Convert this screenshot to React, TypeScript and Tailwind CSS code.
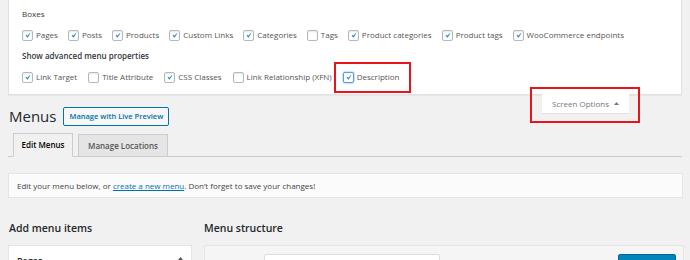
import React from "react";

function Cb({ checked = false, focus = false }: { checked?: boolean; focus?: boolean }) {
  return (
    <span
      className={
        focus
          ? "w-[11px] h-[11px] shrink-0 rounded-[2px] border border-[#5b9dd9] bg-white shadow-[0_0_2px_rgba(30,140,190,0.8)] flex items-center justify-center"
          : "w-[11px] h-[11px] shrink-0 rounded-[2px] border border-[#b4b9be] bg-white shadow-[inset_0_1px_2px_rgba(0,0,0,0.1)] flex items-center justify-center"
      }
    >
      {checked && (
        <svg viewBox="0 0 20 20" className="w-[13px] h-[13px]">
          <path d="M14.83 4.89l1.34.94-5.81 8.38H9.02L5.78 9.67l1.34-1.25 2.57 2.4z" fill="#1e8cbe" />
        </svg>
      )}
    </span>
  );
}

function Opt({ label, checked = false, focus = false }: { label: string; checked?: boolean; focus?: boolean }) {
  return (
    <label className="flex items-center gap-[3px] whitespace-nowrap">
      <Cb checked={checked} focus={focus} />
      <span>{label}</span>
    </label>
  );
}

export default function App() {
  return (
    <div
      className="relative w-[690px] h-[260px] overflow-hidden bg-[#f1f1f1] text-[#555]"
      style={{ fontFamily: '"Open Sans", "Noto Sans", sans-serif' }}
    >
      {/* Screen options panel */}
      <div className="relative ml-2 w-[674px] h-[95px] bg-white border border-t-0 border-[#e1e1e1] shadow-[0_1px_1px_rgba(0,0,0,0.04)] pl-[13px] pt-[8px] text-[8px]">
        <div className="font-medium text-[#32373c] leading-[12px]">Boxes</div>
        <div className="mt-[9px] flex items-center gap-[10px] leading-[12px]">
          <Opt label="Pages" checked />
          <Opt label="Posts" checked />
          <Opt label="Products" checked />
          <Opt label="Custom Links" checked />
          <Opt label="Categories" checked />
          <Opt label="Tags" />
          <Opt label="Product categories" checked />
          <Opt label="Product tags" checked />
          <Opt label="WooCommerce endpoints" checked />
        </div>
        <div className="mt-[9px] font-semibold text-[#32373c] leading-[12px]">Show advanced menu properties</div>
        <div className="mt-[9px] flex items-center gap-[11px] leading-[12px]">
          <Opt label="Link Target" checked />
          <Opt label="Title Attribute" />
          <Opt label="CSS Classes" checked />
          <Opt label="Link Relationship (XFN)" />
          <Opt label="Description" checked focus />
        </div>

        {/* Screen Options tab hanging below panel */}
        <div className="absolute top-full right-[52px] w-[87px] h-[19px] bg-white shadow-[0_1px_1px_rgba(0,0,0,0.06)] flex items-center justify-center gap-[5px] text-[8px] text-[#72777c]">
          <span>Screen Options</span>
          <svg viewBox="0 0 10 6" className="w-[5px] h-[3px]">
            <path d="M0 6L5 0L10 6Z" fill="#72777c" />
          </svg>
        </div>
      </div>

      {/* Heading */}
      <div className="mt-[12px] ml-[9px] flex items-center gap-[7px]">
        <h1 className="text-[15px] leading-[19px] text-[#23282d]">Menus</h1>
        <button className="h-[19px] px-[5px] border border-[#0073aa] bg-[#f7f7f7] text-[#0073aa] text-[7.5px] font-semibold rounded-[2px] leading-none">
          Manage with Live Preview
        </button>
      </div>

      {/* Tabs */}
      <div className="mt-[7px] mx-2 border-b border-[#ccc] pl-[5px] flex items-end gap-[5px] text-[8px] font-semibold">
        <div className="h-[24px] w-[60px] -mb-px border border-[#ccc] border-b-[#f1f1f1] bg-[#f1f1f1] text-[#000] flex items-center justify-center">
          Edit Menus
        </div>
        <div className="h-[22px] w-[90px] border border-b-0 border-[#ccc] bg-[#e5e5e5] text-[#555] flex items-center justify-center">
          Manage Locations
        </div>
      </div>

      {/* Notice */}
      <div className="mt-[16px] ml-2 w-[675px] h-[25px] bg-[#fbfbfb] border border-[#e5e5e5] flex items-center pl-[8px] text-[8px] text-[#444]">
        <span>
          Edit your menu below, or{" "}
          <span className="text-[#0073aa] underline">create a new menu</span>. Don’t forget to save your changes!
        </span>
      </div>

      {/* Columns */}
      <div className="mt-[23px] ml-2 flex gap-[12px]">
        <div className="w-[184px]">
          <h2 className="ml-[1px] text-[10.5px] leading-[14px] font-semibold text-[#23282d]">Add menu items</h2>
          <div className="mt-[10px] h-[30px] bg-white border border-[#e5e5e5] flex items-start justify-between px-[8px] pt-[8px] text-[9px] font-semibold text-[#23282d]">
            <span>Pages</span>
            <svg viewBox="0 0 10 6" className="w-[5px] h-[3px] mt-[3px]">
              <path d="M0 6L5 0L10 6Z" fill="#555" />
            </svg>
          </div>
        </div>
        <div className="w-[480px]">
          <h2 className="text-[10.5px] leading-[14px] font-semibold text-[#23282d]">Menu structure</h2>
          <div className="mt-[10px] h-[30px] bg-[#f5f5f5] border border-[#e5e5e5] flex items-start pt-[8px] pl-[59px] pr-[7px]">
            <div className="w-[176px] h-[18px] bg-white border border-[#ddd] rounded-[2px]" />
            <div className="ml-auto w-[58px] h-[18px] bg-[#0085ba] border border-[#006799] rounded-[2px]" />
          </div>
        </div>
      </div>

      {/* Red annotation boxes */}
      <div className="absolute left-[334px] top-[62px] w-[77px] h-[31px] border-[2.5px] border-[#e8141c]" />
      <div className="absolute left-[530px] top-[87px] w-[110px] h-[36px] border-[2.5px] border-[#e8141c]" />
    </div>
  );
}
